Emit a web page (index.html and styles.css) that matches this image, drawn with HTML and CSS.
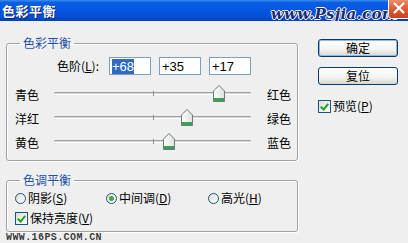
FILE: index.html
```html
<!DOCTYPE html>
<html lang="zh-CN">
<head>
  <meta charset="UTF-8">
  <title>色彩平衡</title>
  <link rel="stylesheet" href="styles.css">
</head>
<body>
  <div class="dialog">
    <!-- Title bar -->
    <div class="titlebar">
      <span class="title">色彩平衡</span>
      <span class="site">www.Psjia.com</span>
      <span class="close">
        <svg width="22" height="19" viewBox="0 0 22 19">
          <defs>
            <linearGradient id="cg" x1="0" y1="0" x2="0" y2="1">
              <stop offset="0" stop-color="#f0a080"/>
              <stop offset="0.5" stop-color="#e0603a"/>
              <stop offset="1" stop-color="#c8401e"/>
            </linearGradient>
          </defs>
          <rect x="0.5" y="-3" width="23" height="21.5" rx="3" fill="url(#cg)" stroke="#fff"/>
          <path d="M6 3 L16 13 M16 3 L6 13" stroke="#fff" stroke-width="2.2"/>
        </svg>
      </span>
    </div>

    <div class="content">
      <div class="main">
        <!-- Colour balance group -->
        <fieldset class="group balance">
          <legend>色彩平衡</legend>
          <div class="levels">
            <span class="levels-label">色阶(<u>L</u>):</span>
            <div class="field"><span class="sel">+68</span></div>
            <div class="field">+35</div>
            <div class="field">+17</div>
          </div>

          <div class="slider-row">
            <span class="end">青色</span>
            <div class="track">
              <span class="groove"></span>
              <span class="tick"></span>
              <span class="thumb" style="left: 84%">
                <svg width="12" height="17" viewBox="0 0 12 17"><defs><linearGradient id="tg1" x1="0" y1="0" x2="1" y2="0"><stop offset="0" stop-color="#ffffff"/><stop offset="1" stop-color="#dde3dd"/></linearGradient></defs><path d="M0.5 6 L6 0.5 L11.5 6 V16.5 H0.5 Z" fill="url(#tg1)" stroke="#6d7d72"/><rect x="1" y="13" width="10" height="3" fill="#3a9f57"/></svg>
              </span>
            </div>
            <span class="end">红色</span>
          </div>

          <div class="slider-row">
            <span class="end">洋红</span>
            <div class="track">
              <span class="groove"></span>
              <span class="tick"></span>
              <span class="thumb" style="left: 67.5%">
                <svg width="12" height="17" viewBox="0 0 12 17"><defs><linearGradient id="tg2" x1="0" y1="0" x2="1" y2="0"><stop offset="0" stop-color="#ffffff"/><stop offset="1" stop-color="#dde3dd"/></linearGradient></defs><path d="M0.5 6 L6 0.5 L11.5 6 V16.5 H0.5 Z" fill="url(#tg2)" stroke="#6d7d72"/><rect x="1" y="13" width="10" height="3" fill="#3a9f57"/></svg>
              </span>
            </div>
            <span class="end">绿色</span>
          </div>

          <div class="slider-row">
            <span class="end">黄色</span>
            <div class="track">
              <span class="groove"></span>
              <span class="tick"></span>
              <span class="thumb" style="left: 58.5%">
                <svg width="12" height="17" viewBox="0 0 12 17"><defs><linearGradient id="tg3" x1="0" y1="0" x2="1" y2="0"><stop offset="0" stop-color="#ffffff"/><stop offset="1" stop-color="#dde3dd"/></linearGradient></defs><path d="M0.5 6 L6 0.5 L11.5 6 V16.5 H0.5 Z" fill="url(#tg3)" stroke="#6d7d72"/><rect x="1" y="13" width="10" height="3" fill="#3a9f57"/></svg>
              </span>
            </div>
            <span class="end">蓝色</span>
          </div>
        </fieldset>

        <!-- Tone balance group -->
        <fieldset class="group tone">
          <legend>色调平衡</legend>
          <div class="radios">
            <label class="opt"><span class="radio"></span>阴影(<u>S</u>)</label>
            <label class="opt"><span class="radio on"></span>中间调(<u>D</u>)</label>
            <label class="opt"><span class="radio"></span>高光(<u>H</u>)</label>
          </div>
          <label class="check keep"><span class="box on"></span>保持亮度(<u>V</u>)</label>
        </fieldset>

        <div class="stamp">WWW.16PS.COM.CN</div>
      </div>

      <!-- Buttons -->
      <div class="side">
        <button class="btn default">确定</button>
        <button class="btn">复位</button>
        <label class="check preview"><span class="box on"></span>预览(<u>P</u>)</label>
      </div>
    </div>
  </div>
</body>
</html>
```

FILE: styles.css
```css
/* Photoshop colour balance dialog, XP look */
body {
  margin: 0;
  background: #efefef;
  font-family: "Noto Sans CJK SC", sans-serif;
  font-size: 12px;
  line-height: 14px;
  color: #000;
}
.dialog {
  width: 408px;
  height: 243px;
  overflow: hidden;
}

/* Title bar */
.titlebar {
  height: 21px;
  display: flex;
  align-items: center;
  background: linear-gradient(#3c8cf4 0, #0b5fdf 12%, #0656e4 45%, #0450d6 80%, #0340b4 100%);
  overflow: hidden;
}
.title {
  margin-left: 2px;
  color: #fff;
  font-size: 13px;
  font-weight: bold;
  letter-spacing: 0.5px;
  text-shadow: 1px 1px 0 #0a2470;
}
.site {
  margin-left: auto;
  margin-top: 6px;
  font-family: "DejaVu Serif", serif;
  font-style: italic;
  font-weight: bold;
  font-size: 15px;
  letter-spacing: 0.3px;
  color: #1b2c72;
  text-shadow: -1px 0 0 #fff, 1px 0 0 #fff, 0 -1px 0 #fff, 0 1px 0 #fff;
}
.close {
  display: flex;
  align-self: flex-start;
  margin-left: -10px;
  margin-right: -2px;
}

/* Layout */
.content {
  display: flex;
  padding-left: 6px;
}
.main {
  width: 292px;
  padding-top: 15px;
}
.side {
  margin-left: 20px;
  padding-top: 18px;
  display: flex;
  flex-direction: column;
  align-items: flex-start;
}

/* Group boxes */
.group {
  margin: 0;
  padding: 0 6px 5px 8px;
  width: 292px;
  box-sizing: border-box;
  border: 1px solid #a3a29b;
  border-radius: 3px;
  box-shadow: inset 1px 1px 0 #fff, 1px 1px 0 #fff;
}
.group legend {
  padding: 0 3px;
  margin-left: 5px;
  color: #1f4fa4;
  line-height: 14px;
}
.tone {
  margin-top: 12px;
  padding-bottom: 6px;
}

/* Levels row */
.levels {
  display: flex;
  align-items: center;
  margin-top: 7px;
  padding-left: 34px;
  height: 18px;
}
.levels-label {
  width: 50px;
  text-align: right;
  margin-right: 10px;
}
.field {
  width: 42px;
  height: 18px;
  box-sizing: border-box;
  margin-right: 8px;
  padding: 1px 0 0 2px;
  border: 1px solid #7f9db9;
  background: #fff;
  font-family: "Liberation Sans", sans-serif;
  font-size: 13px;
  line-height: 15px;
}
.sel {
  background: #316ac5;
  color: #fff;
}

/* Sliders */
.slider-row {
  display: flex;
  height: 24px;
  align-items: center;
}
.levels + .slider-row {
  margin-top: 8px;
}
.end {
  width: 24px;
}
.track {
  flex: 1;
  height: 24px;
  margin: 0 16px 0 15px;
  position: relative;
}
.groove {
  position: absolute;
  left: 0;
  right: 0;
  top: 9px;
  height: 1px;
  border-top: 1px solid #a2a2a2;
  border-bottom: 1px solid #fff;
  border-radius: 1px;
  background: #d8d8d8;
}
.tick {
  position: absolute;
  left: 50%;
  top: 8px;
  width: 1px;
  height: 5px;
  background: #8c8c8c;
}
.thumb {
  position: absolute;
  top: 2px;
  transform: translateX(-50%);
  display: flex;
}

/* Radios and checkboxes */
.radios {
  display: grid;
  grid-template-columns: 91px 102px auto;
  margin-top: 4px;
  height: 14px;
}
.opt,
.check {
  display: flex;
  align-items: center;
}
.radio {
  width: 11px;
  height: 11px;
  box-sizing: border-box;
  margin-right: 2px;
  border: 1px solid #1d5281;
  border-radius: 50%;
  background: linear-gradient(135deg, #dcdcd6, #fff);
  display: flex;
  align-items: center;
  justify-content: center;
}
.radio.on::after {
  content: "";
  width: 5px;
  height: 5px;
  border-radius: 50%;
  background: #46a04a;
}
.box {
  width: 13px;
  height: 13px;
  box-sizing: border-box;
  margin-right: 2px;
  border: 1px solid #1d5281;
  background: linear-gradient(135deg, #dcdcd6, #fff);
  position: relative;
}
.box.on::after {
  content: "";
  position: absolute;
  left: 3px;
  top: 1px;
  width: 3px;
  height: 6px;
  border: solid #21a121;
  border-width: 0 2px 2px 0;
  transform: rotate(40deg);
}
.keep {
  margin-top: 6px;
  height: 14px;
}

.stamp {
  margin-top: 1px;
  font-family: "Liberation Mono", monospace;
  font-size: 10px;
  font-weight: bold;
  line-height: 9px;
  letter-spacing: 0.4px;
  color: #3a3a3a;
  text-shadow: 0 0 1px #fff;
}

/* Buttons */
.btn {
  width: 80px;
  height: 18px;
  padding: 0;
  margin-bottom: 10px;
  font-family: inherit;
  font-size: 12px;
  line-height: 14px;
  color: #000;
  border: 1px solid #003c74;
  border-radius: 3px;
  background: linear-gradient(#ffffff, #f3f3ef 60%, #d8d6cc);
}
.btn.default {
  box-shadow: inset 0 0 0 1px #98b4e6;
}
.preview {
  margin-top: 4px;
}
```
